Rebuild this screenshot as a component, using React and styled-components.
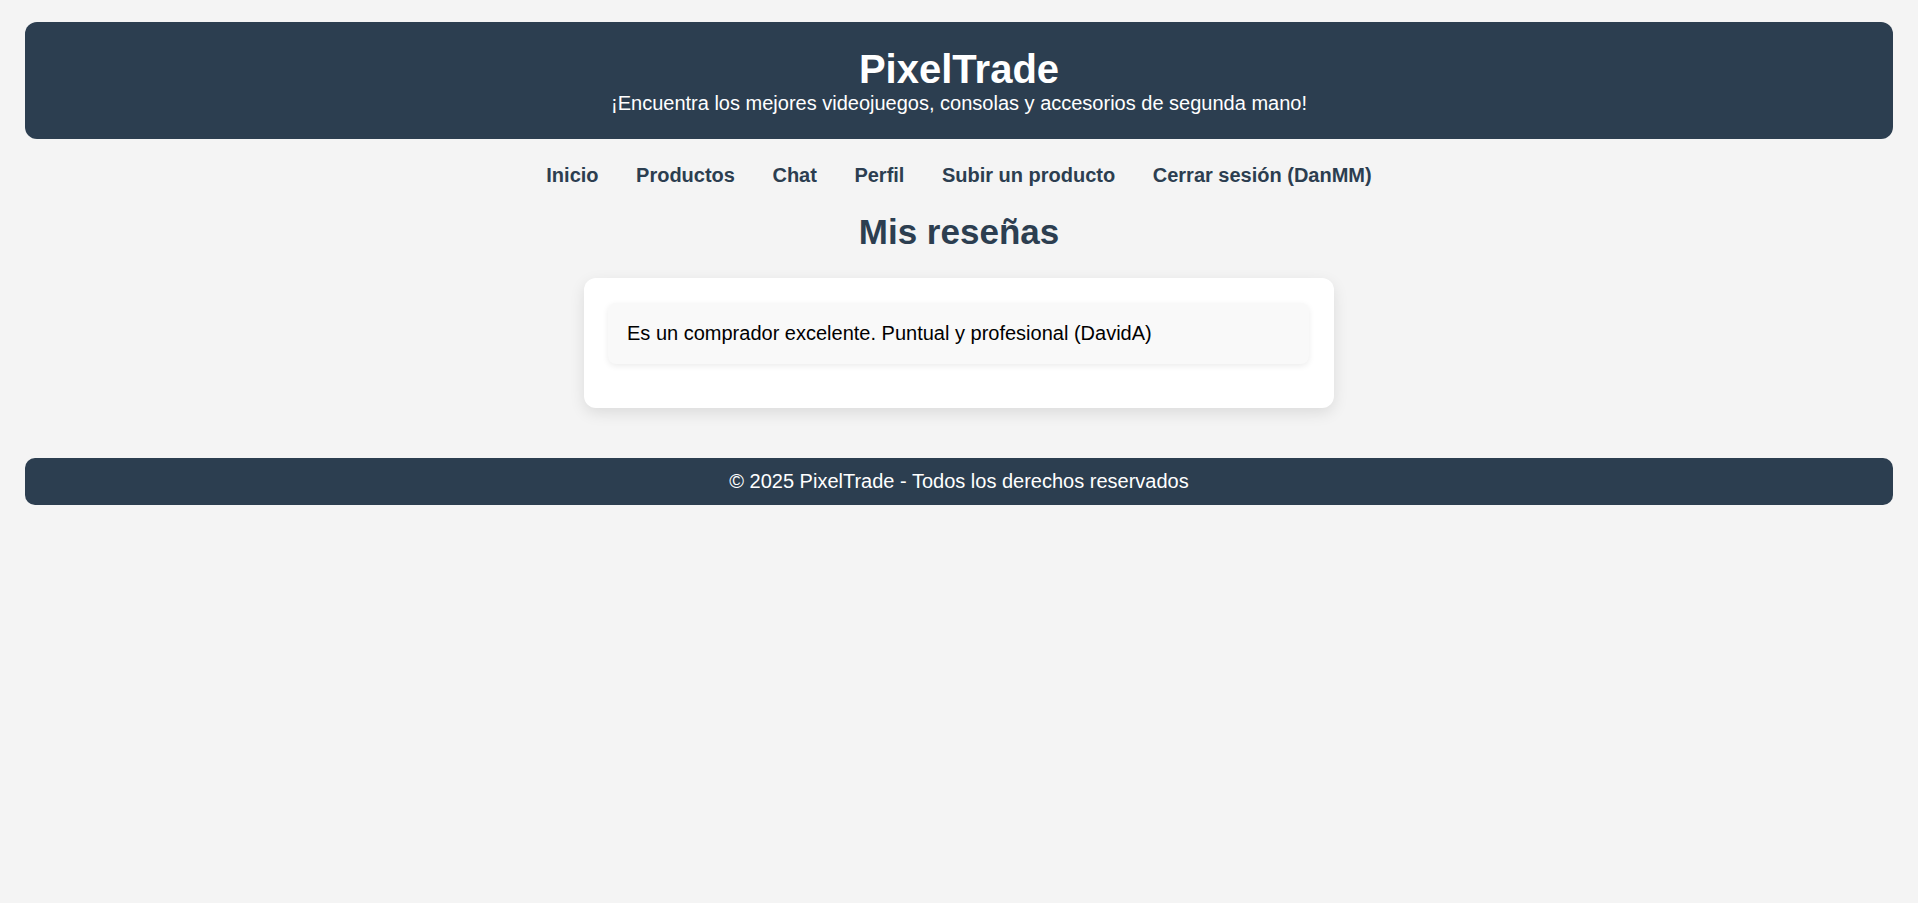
import React from 'react';
import styled, { createGlobalStyle } from 'styled-components';

const GlobalStyle = createGlobalStyle`
  body {
    margin: 0;
    padding: 22px 25px;
    background: #f4f4f4;
    font-family: Arial, "Liberation Sans", Helvetica, sans-serif;
    font-size: 20px;
    color: #000;
  }
`;

const Header = styled.header`
  background: #2c3e50;
  color: #fff;
  text-align: center;
  padding: 24px 20px;
  border-radius: 12px;
`;

const Title = styled.h1`
  margin: 0;
  font-size: 40px;
  line-height: 46px;
`;

const Subtitle = styled.p`
  margin: 0;
  font-size: 20px;
  line-height: 23px;
`;

const Nav = styled.nav`
  display: flex;
  justify-content: center;
  margin-top: 25px;
`;

const NavLink = styled.a`
  margin: 0 18.75px;
  color: #2c3e50;
  font-weight: bold;
  text-decoration: none;
  line-height: 23px;
  cursor: pointer;
`;

const Heading = styled.h2`
  margin: 25px 0 0;
  text-align: center;
  color: #2c3e50;
  font-size: 35px;
  line-height: 40px;
`;

const Card = styled.section`
  width: 750px;
  box-sizing: border-box;
  margin: 26px auto 0;
  padding: 25px 25px 25px 24px;
  background: #fff;
  border-radius: 12px;
  box-shadow: 0 5px 15px rgba(0, 0, 0, 0.1);
`;

const Review = styled.div`
  background: #f9f9f9;
  padding: 19px 19px;
  margin-bottom: 18.75px;
  border-radius: 8px;
  box-shadow: 0 2px 6px rgba(0, 0, 0, 0.08);
  line-height: 23px;
`;

const Footer = styled.footer`
  margin-top: 50px;
  background: #2c3e50;
  color: #fff;
  text-align: center;
  padding: 12px 0;
  border-radius: 10px;
  line-height: 23px;
`;

const links = ['Inicio', 'Productos', 'Chat', 'Perfil', 'Subir un producto', 'Cerrar sesión (DanMM)'];

const reviews = ['Es un comprador excelente. Puntual y profesional (DavidA)'];

export default function App() {
  return (
    <>
      <GlobalStyle />
      <Header>
        <Title>PixelTrade</Title>
        <Subtitle>¡Encuentra los mejores videojuegos, consolas y accesorios de segunda mano!</Subtitle>
      </Header>
      <Nav>
        {links.map((l) => (
          <NavLink key={l}>{l}</NavLink>
        ))}
      </Nav>
      <Heading>Mis reseñas</Heading>
      <Card>
        {reviews.map((r) => (
          <Review key={r}>{r}</Review>
        ))}
      </Card>
      <Footer>© 2025 PixelTrade - Todos los derechos reservados</Footer>
    </>
  );
}
